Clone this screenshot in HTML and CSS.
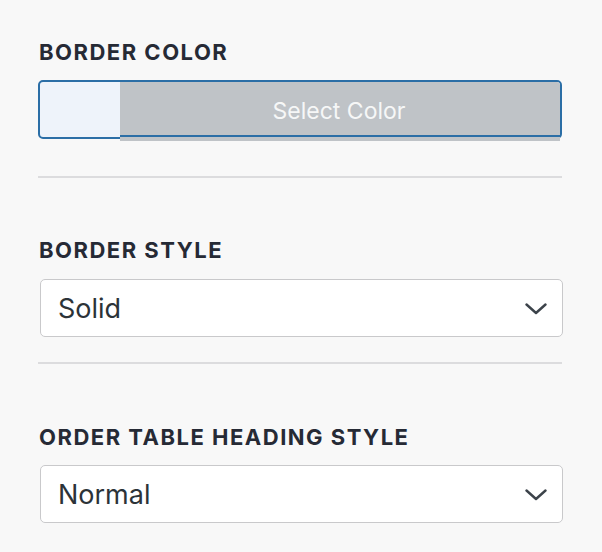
FILE: index.html
```html
<!DOCTYPE html>
<html>
<head>
<meta charset="utf-8">
<link rel="stylesheet" href="styles.css">
</head>
<body>
<div class="panel">
  <div class="field field-color">
    <div class="label">BORDER COLOR</div>
    <div class="color-picker">
      <span class="swatch"></span>
      <span class="select-color">Select Color</span>
    </div>
  </div>
  <hr class="sep sep-1">
  <div class="field field-style">
    <div class="label">BORDER STYLE</div>
    <div class="select">
      <span class="value">Solid</span>
      <svg class="chev" width="22" height="12" viewBox="0 0 22 12"><path d="M1.5 1.5 L11 10 L20.5 1.5" fill="none" stroke="#3c434a" stroke-width="2.4" stroke-linecap="round" stroke-linejoin="round"/></svg>
    </div>
  </div>
  <hr class="sep sep-2">
  <div class="field field-heading">
    <div class="label">ORDER TABLE HEADING STYLE</div>
    <div class="select">
      <span class="value">Normal</span>
      <svg class="chev" width="22" height="12" viewBox="0 0 22 12"><path d="M1.5 1.5 L11 10 L20.5 1.5" fill="none" stroke="#3c434a" stroke-width="2.4" stroke-linecap="round" stroke-linejoin="round"/></svg>
    </div>
  </div>
</div>
</body>
</html>
```
FILE: styles.css
```css
html, body {
  margin: 0;
  padding: 0;
  background: #f8f8f8;
}
body {
  font-family: Inter, "Noto Sans", "Liberation Sans", sans-serif;
  color: #1d2327;
}
.panel {
  width: 524px;
  padding: 40px 0 0 38px;
}
.label {
  font-size: 22px;
  line-height: 24px;
  font-weight: 700;
  letter-spacing: 1.5px;
  color: #262a35;
  padding-left: 1px;
}
.color-picker {
  margin-top: 16px;
  height: 59px;
  box-sizing: border-box;
  border: 2px solid #2b6ea6;
  border-radius: 5px;
  display: flex;
  background: #eef3fa;
}
.swatch {
  width: 80px;
  flex: none;
  border-radius: 3px 0 0 3px;
}
.select-color {
  flex: 1;
  box-sizing: border-box;
  height: 59px;
  margin-bottom: -4px;
  padding-top: 3px;
  background: linear-gradient(to bottom, #bfc3c7 0, #bfc3c7 53px, #2b6ea6 53px, #2b6ea6 55px, #bfc3c7 55px);
  border-radius: 0 3px 0 0;
  color: #f6f7f7;
  font-size: 23px;
  line-height: 52px;
  text-align: center;
  padding-right: 2px;
}
.sep {
  margin: 0;
  border: 0;
  height: 2px;
  background: #dcdcde;
}
.sep-1 { margin-top: 37px; }
.field-style { margin-top: 60px; }
.sep-2 { margin-top: 25px; }
.field-heading { margin-top: 61px; }
.select {
  margin-top: 17px;
  margin-left: 2px;
  width: 523px;
  height: 58px;
  box-sizing: border-box;
  background: #fff;
  border: 1px solid #c9c9cb;
  border-radius: 5px;
  display: flex;
  align-items: center;
  justify-content: space-between;
  padding: 0 15px 0 17px;
}
.field-heading .select { margin-top: 16px; }
.value {
  font-size: 27px;
  color: #2c3338;
}
.chev {
  display: block;
  margin-top: 1px;
}
```
